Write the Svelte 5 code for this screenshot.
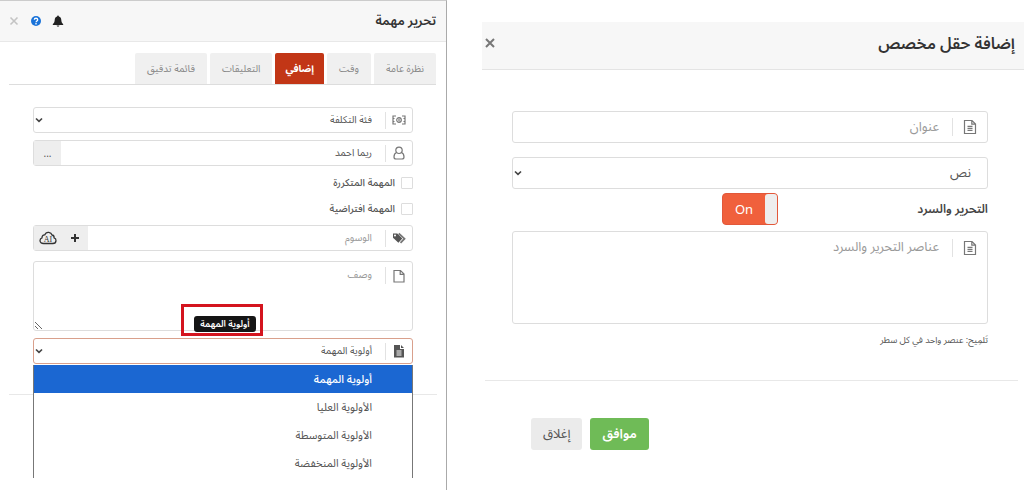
<script lang="ts">
  const tabs = ['نظرة عامة', 'وقت', 'إضافي', 'التعليقات', 'قائمة تدقيق'];
  const priorities = ['أولوية المهمة', 'الأولوية العليا', 'الأولوية المتوسطة', 'الأولوية المنخفضة'];

  let activeTab = $state('إضافي');
  let priority = $state(priorities[0]);
  let assignee = $state('ريما احمد');
  let listing = $state(true);
</script>

{#snippet chevron()}
  <svg class="chevron" viewBox="0 0 8 8" aria-hidden="true"><path d="M1 2.500 4 5.300 7 2.500" /></svg>
{/snippet}

{#snippet textFile()}
  <svg class="icon icon-lg line" viewBox="0 0 14 16" aria-hidden="true">
    <path d="M1.500 1.500H9l3.500 3.500v9.500h-11z M8.800 1.500v3.700h3.700 M4.500 7.300h5M4.500 9.300h5M4.500 11.300h5" />
  </svg>
{/snippet}

<div class="page">
  <section class="task" dir="rtl">
    <header class="task-head">
      <h2>تحرير مهمة</h2>
      <div class="head-actions">
        <button type="button" aria-label="التنبيهات">
          <svg viewBox="0 0 12 12" aria-hidden="true">
            <path fill="#222" d="M6 .5c.6 0 .9.4.9.9C8.600 1.800 9.200 3.200 9.300 5c.1 2 .7 3 1.900 4.200v.8H.8v-.8C2 8 2.600 7 2.700 5c.1-1.800.7-3.200 2.400-3.600 0-.5.3-.9.9-.9zM4.600 10.400h2.800c-.2.8-.7 1.200-1.400 1.200s-1.200-.4-1.400-1.200z" />
          </svg>
        </button>
        <button type="button" aria-label="مساعدة">
          <svg viewBox="0 0 12 12" aria-hidden="true">
            <circle cx="6" cy="6" r="5" fill="#1a73d9" />
            <path fill="none" stroke="#fff" stroke-width="1.300" d="M4.300 4.800c0-2.100 3.400-2.100 3.400 0C7.700 6 6 5.900 6 7.300M6 8.100v1.300" />
          </svg>
        </button>
        <button type="button" aria-label="إغلاق">
          <svg viewBox="0 0 12 12" aria-hidden="true">
            <path stroke="#c4c4c4" stroke-width="1.600" d="m2.500 2.500 7 7M9.500 2.500l-7 7" />
          </svg>
        </button>
      </div>
    </header>

    <nav class="tabs">
      {#each tabs as tab}
        <button type="button" class="tab" class:active={tab === activeTab} onclick={() => (activeTab = tab)}>{tab}</button>
      {/each}
    </nav>

    <form class="task-form">
      <div class="field">
        <label class="field-icon" for="cost" aria-label="فئة التكلفة">
          <svg class="icon line" viewBox="0 0 14 14" aria-hidden="true">
            <path d="M4 3H1v8h3M10 3h3v8h-3M1 5.500h1.500M1 8.500h1.500M11.500 5.500H13M11.500 8.500H13M7 5.500v3" />
            <circle cx="7" cy="7" r="2.300" />
          </svg>
        </label>
        <select id="cost"><option>فئة التكلفة</option></select>
        {@render chevron()}
      </div>

      <div class="field">
        <label class="field-icon" for="assignee" aria-label="الموظف">
          <svg class="icon line" viewBox="0 0 14 14" aria-hidden="true">
            <circle cx="7" cy="4.300" r="3.200" />
            <path d="M4.500 6.500C2.600 7.300 2 9 2 11c0 1.300.7 2 2 2h6c1.300 0 2-.7 2-2 0-2-.6-3.700-2.500-4.500" />
          </svg>
        </label>
        <input id="assignee" type="text" bind:value={assignee} />
        <button type="button" class="addon" aria-label="اختيار">...</button>
      </div>

      <label class="check"><input type="checkbox" /><span>المهمة المتكررة</span></label>
      <label class="check"><input type="checkbox" /><span>المهمة افتراضية</span></label>

      <div class="field">
        <label class="field-icon" for="tags" aria-label="الوسوم">
          <svg class="icon" viewBox="0 0 14 14" aria-hidden="true">
            <path fill="#555" fill-rule="evenodd" d="M1 2.500h4.300l5 5-3.900 4.200L1 6.700zM3 3.500a1 1 0 1 0 0 2 1 1 0 0 0 0-2z" />
            <path fill="none" stroke="#777" stroke-width="1.800" d="m6.700 2.500 5.800 5.200-4 4.200" />
          </svg>
        </label>
        <input id="tags" type="text" placeholder="الوسوم" />
        <button type="button" class="addon" aria-label="إضافة وسم">
          <svg class="plus" viewBox="0 0 10 10" aria-hidden="true"><path d="M5 1v8M1 5h8" /></svg>
        </button>
        <button type="button" class="addon" aria-label="AI">
          <svg class="cloud" viewBox="0 0 18 14" aria-hidden="true">
            <path d="M4.500 12.500C2.400 12.500 1 11.400 1 9.600 1 8.200 1.800 7.100 3 6.800 3 4.800 4.200 3.700 5.800 3.900 6.500 2 8 1.200 9.800 1.400c1.700.2 2.800 1.100 3.200 2.600 1.500.2 2.200 1.300 2.100 2.800 1.300.4 2 1.400 1.900 2.800-.1 1.800-1.300 2.900-3.100 2.900z" />
            <text x="9" y="11" text-anchor="middle">AI</text>
          </svg>
        </button>
      </div>

      <div class="field area">
        <label class="field-icon" for="desc" aria-label="وصف">
          <svg class="icon line" viewBox="0 0 14 14" aria-hidden="true">
            <path d="M2 1.500h6.500L12 5v8H2zM8.200 1.500v3.800H12" />
          </svg>
        </label>
        <textarea id="desc" placeholder="وصف"></textarea>
        <div class="callout"><span class="tooltip" role="tooltip" id="priority-tip">أولوية المهمة</span></div>
      </div>

      <div class="field open">
        <label class="field-icon" for="priority" aria-label="أولوية المهمة">
          <svg class="icon" viewBox="0 0 14 14" aria-hidden="true">
            <path fill="#555" fill-rule="evenodd" d="M2 1h6v4h4v8.500H2zM9 1l3 3H9zM4.500 6.500h5v1h-5zm0 2h5v1h-5zm0 2h5v1h-5z" />
          </svg>
        </label>
        <select id="priority" aria-describedby="priority-tip" bind:value={priority}>
          {#each priorities as p}
            <option>{p}</option>
          {/each}
        </select>
        {@render chevron()}
        <ul class="menu" role="listbox" aria-label="أولوية المهمة">
          {#each priorities as p}
            <li role="option" aria-selected={p === priority}>{p}</li>
          {/each}
        </ul>
      </div>
    </form>
    <hr />
  </section>

  <section class="custom" dir="rtl">
    <header class="custom-head">
      <h2>إضافة حقل مخصص</h2>
      <button type="button" aria-label="إغلاق">
        <svg viewBox="0 0 12 12" aria-hidden="true"><path stroke="#777" stroke-width="2" d="m2 2 8 8M10 2l-8 8" /></svg>
      </button>
    </header>

    <form class="custom-form">
      <div class="field">
        <label class="field-icon" for="title" aria-label="عنوان">{@render textFile()}</label>
        <input id="title" type="text" placeholder="عنوان" />
      </div>

      <div class="field plain">
        <select aria-label="النوع"><option>نص</option></select>
        {@render chevron()}
      </div>

      <div class="switch-row">
        <label for="listing">التحرير والسرد</label>
        <span class="switch" class:off={!listing}>
          <input id="listing" type="checkbox" role="switch" bind:checked={listing} />
          <span class="knob"></span>
          <span class="state">{listing ? 'On' : 'Off'}</span>
        </span>
      </div>

      <div class="field area">
        <label class="field-icon" for="items" aria-label="عناصر التحرير والسرد">{@render textFile()}</label>
        <textarea id="items" placeholder="عناصر التحرير والسرد"></textarea>
      </div>
      <p class="hint">تَلمِيح: عنصر واحد في كل سطر</p>
    </form>

    <footer>
      <button type="button" class="btn ok">موافق</button>
      <button type="button" class="btn">إغلاق</button>
    </footer>
  </section>
</div>

<style>
  :global(body) { background: #fff; }

  .page {
    display: grid;
    grid-template-columns: 447fr 577fr;
    min-height: 100vh;
    font-family: "Noto Sans", "Noto Sans Arabic", "DejaVu Sans", sans-serif;
    color: #555;
  }
  .page, .page * { box-sizing: border-box; }

  h2 { margin: 0; color: #333; font-weight: 600; }
  button, input, select, textarea { font: inherit; color: inherit; }
  button {
    display: flex;
    align-items: center;
    justify-content: center;
    padding: 0;
    border: 0;
    background: none;
    cursor: pointer;
  }

  /* shared fields */
  .field {
    position: relative;
    display: flex;
    align-items: center;
    height: var(--field-h);
    border: 1px solid #ddd;
    border-radius: 3px;
    background: #fff;
  }
  .field-icon {
    display: flex;
    align-items: center;
    justify-content: center;
    flex: none;
    width: var(--icon-w);
    height: 18px;
    border-left: 1px solid #e2e2e2;
  }
  .field input, .field select, .field textarea {
    flex: 1;
    min-width: 0;
    height: 100%;
    padding: 0 13px 2px 4px;
    border: 0;
    outline: 0;
    background: transparent;
    appearance: none;
  }
  .field ::placeholder { color: #999; opacity: 1; }
  .field.area { height: auto; align-items: flex-start; }
  .icon { width: 14px; height: 14px; }
  .icon-lg { width: 14px; height: 16px; }
  .line { fill: none; stroke: #777; stroke-width: 1.2; }
  .chevron {
    flex: none;
    width: 8px;
    height: 8px;
    margin-left: 1px;
    fill: none;
    stroke: #444;
    stroke-width: 1.7;
  }

  /* task panel */
  .task {
    --field-h: 26px;
    --icon-w: 27px;
    border-top: 1px solid #ccc;
    border-right: 1px solid #aaa;
    border-left: 0;
    font-size: 10px;
  }
  .task-head {
    display: flex;
    align-items: center;
    justify-content: space-between;
    height: 41px;
    padding: 0 10px 0 8px;
    border-bottom: 1px solid #e8e8e8;
    background: #f7f7f7;
  }
  .task-head h2 { font-size: 13px; }
  .head-actions { display: flex; gap: 10px; }
  .head-actions svg { width: 12px; height: 12px; }

  .tabs {
    display: flex;
    gap: 3px;
    margin: 11px 10px 22px 9px;
    border-bottom: 1px solid #ddd;
  }
  .tab {
    height: 31px;
    padding: 0 12px;
    border-radius: 2px 2px 0 0;
    background: #f0f0f0;
    color: #888;
  }
  .tab.active { padding: 0 10px; background: #c23616; color: #fff; font-weight: 700; }

  .task-form {
    display: flex;
    flex-direction: column;
    gap: 7px;
    padding: 0 33px;
  }
  .addon {
    align-self: stretch;
    width: 27px;
    background: #eee;
  }
  .plus { width: 10px; height: 10px; stroke: #333; stroke-width: 2; }
  .cloud { width: 18px; height: 14px; fill: none; stroke: #333; stroke-width: 1.3; }
  .cloud text { fill: #333; stroke: none; font: 8px "Liberation Serif", serif; }

  .check {
    display: flex;
    align-items: center;
    gap: 6px;
    height: 19px;
  }
  .check input {
    width: 12px;
    height: 12px;
    margin: 0;
    border: 1px solid #ddd;
    border-radius: 1px;
    background: #fff;
    appearance: none;
  }
  .check span { font-weight: 500; }

  .task .area { margin-top: 3px; }
  .task .field-icon { height: 17px; }
  .task .area .field-icon { margin-top: 5px; }
  .task textarea { height: 68px; padding-top: 4px; line-height: 16px; resize: vertical; }

  .callout {
    position: absolute;
    bottom: -6px;
    left: 147px;
    display: flex;
    align-items: flex-end;
    justify-content: center;
    width: 82px;
    height: 32px;
    padding: 0 0 1px 6px;
    border: 3px solid #d4141e;
  }
  .tooltip {
    padding: 0 6px;
    border-radius: 3px;
    background: #151515;
    color: #fff;
    font-size: 9px;
    font-weight: 600;
    line-height: 16px;
    white-space: nowrap;
  }

  .field.open { border-color: #d9a08c; }
  .menu {
    position: absolute;
    top: 26px;
    right: -1px;
    left: -1px;
    margin: 0;
    padding: 0 0 1px;
    border: solid #777;
    border-width: 0 1px;
    background: #fff;
    font-size: 11px;
    list-style: none;
  }
  .menu li { height: 28px; padding: 0 40px; line-height: 28px; }
  .menu li[aria-selected='true'] { background: #1b67d2; color: #fff; font-weight: 500; }

  hr { margin: 30px 9px 0; border: 0; border-top: 1px solid #e8e8e8; }

  /* custom field dialog */
  .custom {
    --field-h: 32px;
    --icon-w: 35px;
    padding: 22px 0 0 35px;
    font-size: 13px;
  }
  .custom-head {
    display: flex;
    align-items: flex-start;
    justify-content: space-between;
    height: 48px;
    padding: 8px 9px 0 2px;
    border-bottom: 1px solid #e4e4e4;
    background: #f7f7f7;
  }
  .custom-head h2 { font-size: 16px; line-height: 26px; }
  .custom-head button { height: 26px; }
  .custom-head svg { width: 12px; height: 12px; }

  .custom-form { padding: 41px 36px 0 30px; }
  .custom .field + .field { margin-top: 14px; }
  .custom .plain select { padding-right: 16px; }
  .switch-row {
    display: flex;
    align-items: center;
    justify-content: space-between;
    padding: 4px 0 6px 210px;
  }
  .switch-row label { color: #444; font-size: 12px; font-weight: 600; }
  .switch {
    position: relative;
    display: flex;
    width: 56px;
    height: 32px;
    border: 1px solid #e2583a;
    border-radius: 4px;
    background: #f0603c;
    color: #fff;
  }
  .switch.off { background: #aaa; }
  .switch input { position: absolute; inset: 0; margin: 0; opacity: 0; }
  .knob { width: 12px; border-radius: 3px; background: #eee; }
  .state { flex: 1; line-height: 30px; text-align: center; }

  .custom .area .field-icon { margin-top: 7px; }
  .custom textarea { height: 91px; padding-top: 4px; line-height: 20px; resize: none; }
  .hint { margin: 6px 0 0; font-size: 9px; line-height: 20px; }

  footer {
    display: flex;
    justify-content: flex-end;
    gap: 8px;
    margin: 30px 6px 0 3px;
    padding: 37px 0 0 46px;
    border-top: 1px solid #e8e8e8;
  }
  .btn {
    height: 32px;
    padding: 0 12px;
    border-radius: 3px;
    background: #ebebeb;
  }
  .btn.ok { background: #6fbb57; color: #fff; font-weight: 600; }
</style>
